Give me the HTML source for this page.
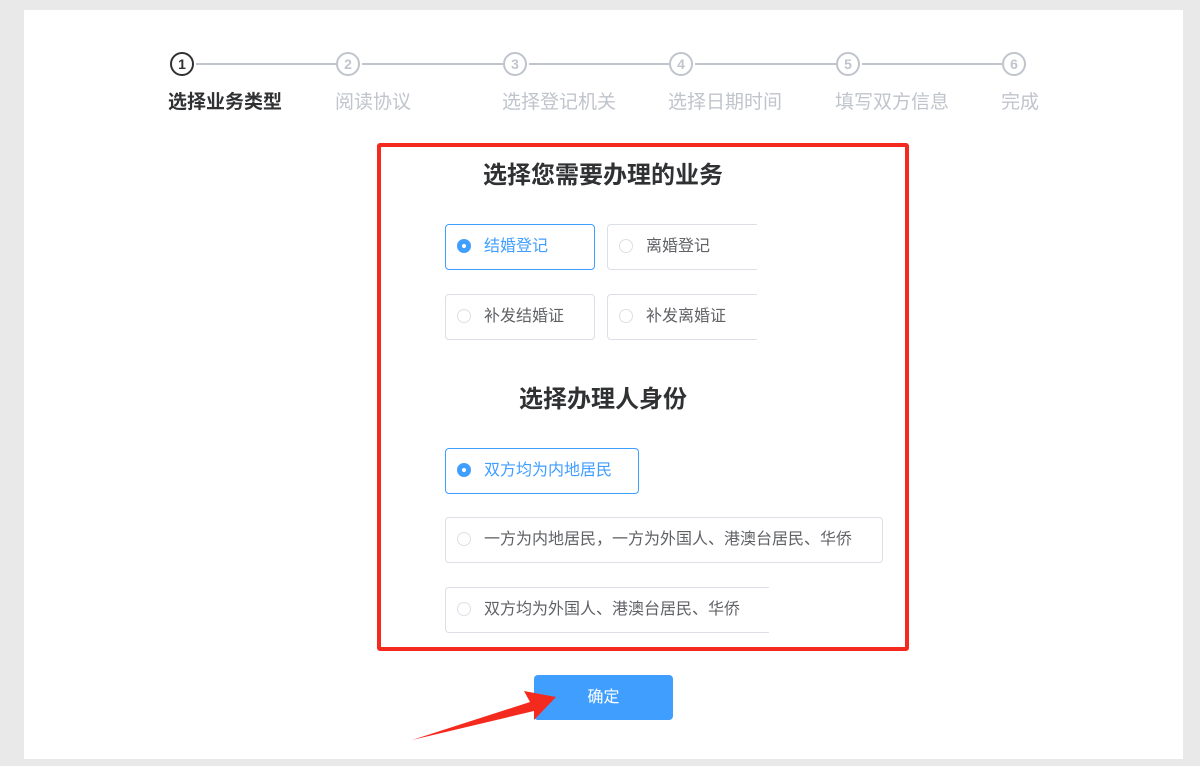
<!DOCTYPE html><html><head><meta charset="utf-8"><style>
body{margin:0;width:1200px;height:766px;background:#e9e9e9;font-family:"Liberation Sans","Noto Sans CJK SC",sans-serif;position:relative;overflow:hidden}
.panel{position:absolute;left:24px;top:10px;width:1159px;height:749px;background:#fff}
.c{position:absolute;width:20px;height:20px;border:2px solid #c0c4cc;border-radius:50%;color:#c0c4cc;font-size:14px;font-weight:bold;text-align:center;line-height:20px;top:52px;background:#fff}
.c.a{border-color:#303133;color:#303133}
.ln{position:absolute;top:63px;height:2px;background:#c0c4cc}
.lb{position:absolute;top:87px;font-size:19px;color:#c0c4cc}
.lb.a{color:#303133;font-weight:bold}
.box{position:absolute;left:377px;top:143px;width:524px;height:500px;border:4px solid #f52a1e;border-radius:3px}
.t{position:absolute;font-size:24px;font-weight:bold;color:#303133;width:400px;text-align:center;left:403px}
.o{position:absolute;box-sizing:border-box;height:46px;border:1px solid #dcdfe6;border-radius:4px;font-size:16px;color:#606266;line-height:44px;padding-left:38px;background:#fff;overflow:hidden}
.o::before{content:"";position:absolute;left:11px;top:14px;width:14px;height:14px;border:1px solid #dcdfe6;border-radius:50%;box-sizing:border-box}
.o.s{border-color:#409eff;color:#409eff}
.o.s::before{background:#409eff;border-color:#409eff}
.o.s::after{content:"";position:absolute;left:16px;top:19px;width:4px;height:4px;background:#fff;border-radius:50%}
.o.r{border-right:none;border-radius:4px 0 0 4px}
.btn{position:absolute;left:534px;top:675px;width:139px;height:45px;background:#409eff;border-radius:4px;color:#fff;font-size:16px;text-align:center;line-height:45px}
</style></head><body>
<div class="panel"></div>
<div class="ln" style="left:196px;width:140px"></div>
<div class="ln" style="left:362px;width:141px"></div>
<div class="ln" style="left:529px;width:140px"></div>
<div class="ln" style="left:695px;width:141px"></div>
<div class="ln" style="left:862px;width:140px"></div>
<div class="c a" style="left:170px">1</div>
<div class="c" style="left:336px">2</div>
<div class="c" style="left:503px">3</div>
<div class="c" style="left:669px">4</div>
<div class="c" style="left:836px">5</div>
<div class="c" style="left:1002px">6</div>
<div class="lb a" style="left:168px">选择业务类型</div>
<div class="lb" style="left:335px">阅读协议</div>
<div class="lb" style="left:502px">选择登记机关</div>
<div class="lb" style="left:668px">选择日期时间</div>
<div class="lb" style="left:835px">填写双方信息</div>
<div class="lb" style="left:1001px">完成</div>
<div class="box"></div>
<div class="t" style="top:155px">选择您需要办理的业务</div>
<div class="o s" style="left:445px;top:224px;width:150px">结婚登记</div>
<div class="o r" style="left:607px;top:224px;width:150px">离婚登记</div>
<div class="o" style="left:445px;top:294px;width:150px">补发结婚证</div>
<div class="o r" style="left:607px;top:294px;width:150px">补发离婚证</div>
<div class="t" style="top:379px">选择办理人身份</div>
<div class="o s" style="left:445px;top:448px;width:194px">双方均为内地居民</div>
<div class="o" style="left:445px;top:517px;width:438px">一方为内地居民，一方为外国人、港澳台居民、华侨</div>
<div class="o r" style="left:445px;top:587px;width:324px">双方均为外国人、港澳台居民、华侨</div>
<div class="btn">确定</div>
<svg style="position:absolute;left:0;top:0" width="1200" height="766"><polygon points="412,740 530,702 524,691 556,697 534,720 534,711" fill="#f52a1e"/></svg>
</body></html>
